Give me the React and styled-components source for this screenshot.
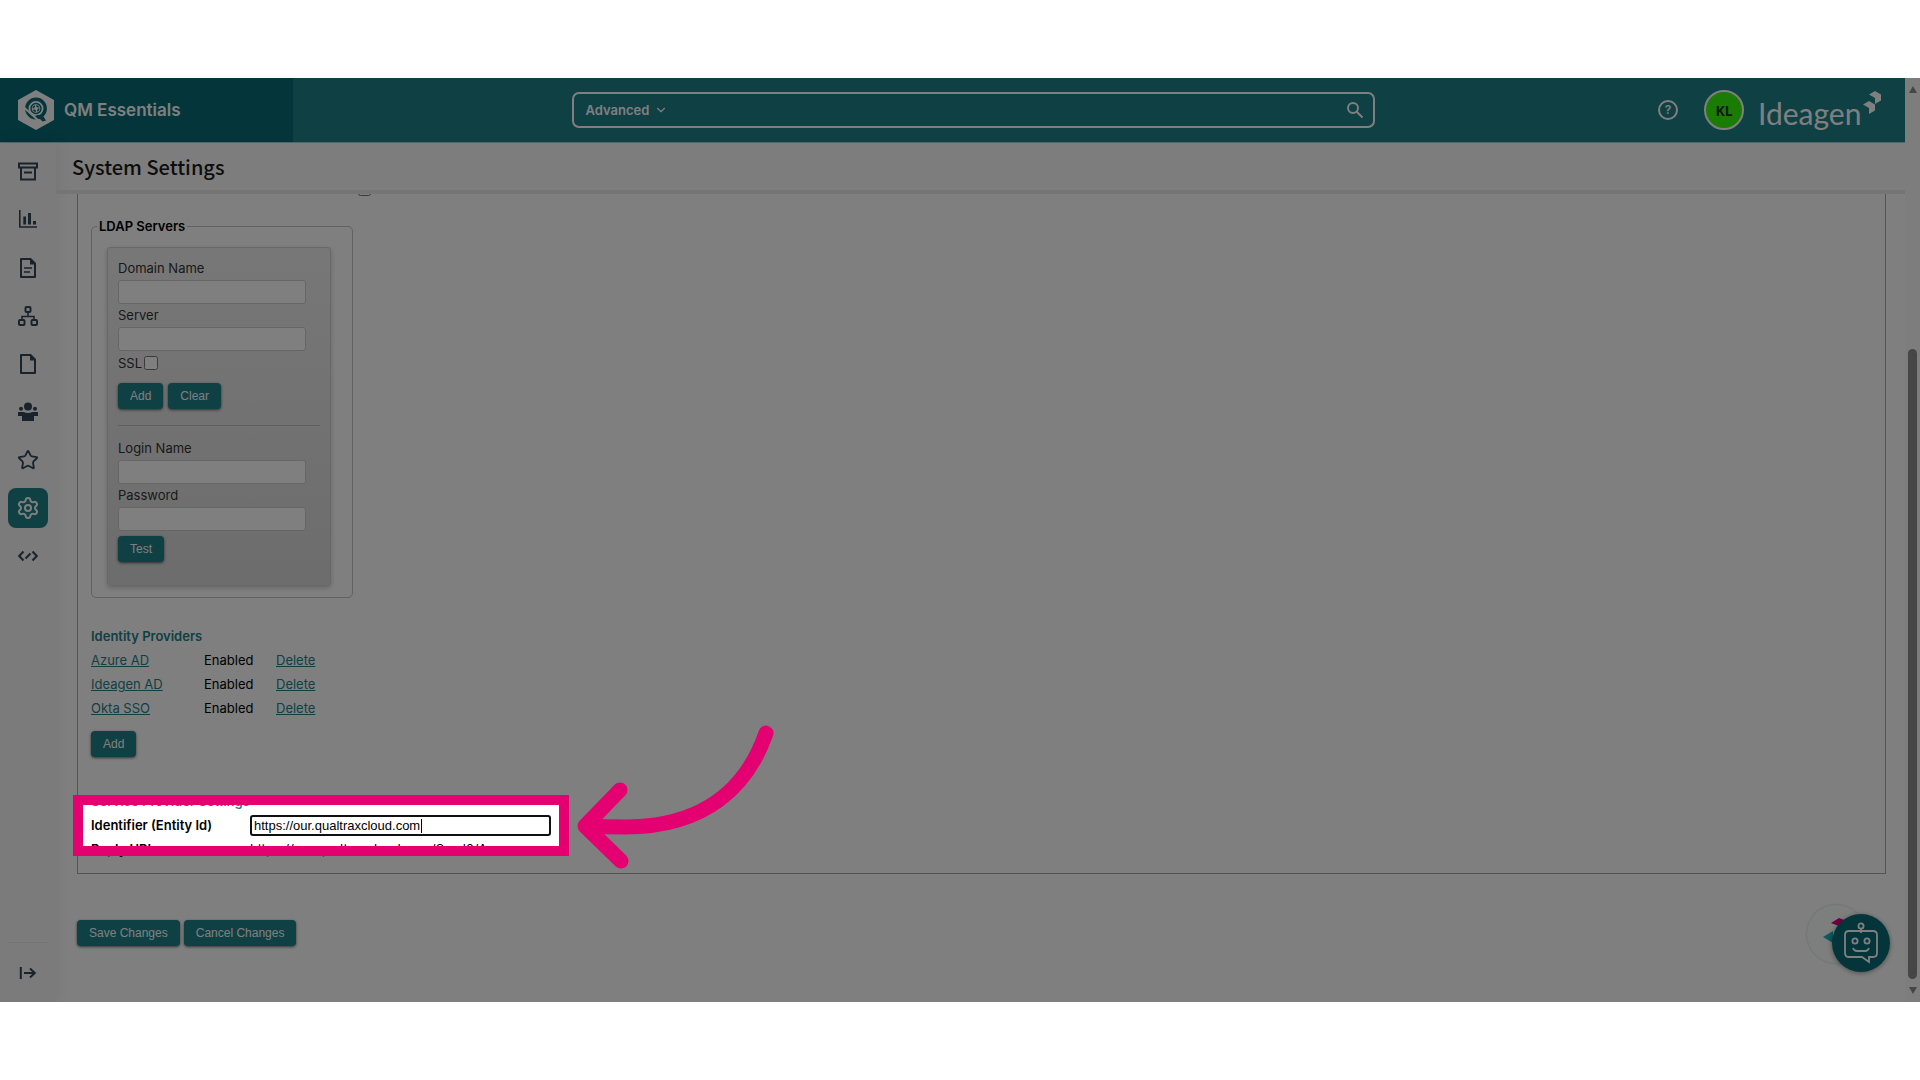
import React, { useState } from 'react';
import styled, { createGlobalStyle } from 'styled-components';
import { ChevronDown, Settings, Star } from 'lucide-react';

const providers = ['Azure AD', 'Ideagen AD', 'Okta SSO'];

const navItems = [
  {
    label: 'Archive',
    icon: (
      <svg viewBox='0 0 20 20'>
        <path d='M1 1.5h18v4H1zM3 6v11.5h14V6' />
        <path d='M6 10.5h8' />
      </svg>
    ),
  },
  {
    label: 'Reports',
    icon: (
      <svg viewBox='0 0 20 20'>
        <path d='M1.8 0v17h17.2' strokeWidth='1.6' />
        <path
          className='solid'
          d='M5.3 6.5H8v8H5.3zM10 3h3v11.5h-3zM15 11h3v3.5h-3z'
        />
      </svg>
    ),
  },
  {
    label: 'Documents',
    icon: (
      <svg viewBox='0 0 20 20'>
        <path d='M3 1h9.5L17 5.5V19H3z' strokeLinejoin='round' />
        <path className='solid' d='M12 1l5.5 5.5H12z' />
        <path d='M6 10h8M6 14h6' strokeWidth='1.6' />
      </svg>
    ),
  },
  {
    label: 'Workflow',
    icon: (
      <svg viewBox='0 0 20 20'>
        <rect x='7.5' y='1' width='5' height='5' rx='1' />
        <rect x='1' y='14' width='5.5' height='5' rx='1' />
        <rect x='13.5' y='14' width='5.5' height='5' rx='1' />
        <path d='M10 6v4M4 14v-3.5h12V14' strokeWidth='1.6' />
      </svg>
    ),
  },
  {
    label: 'Files',
    icon: (
      <svg viewBox='0 0 20 20'>
        <path d='M3 1h9.5L17 5.5V19H3z' strokeLinejoin='round' />
        <path className='solid' d='M12 1l5.5 5.5H12z' />
      </svg>
    ),
  },
  {
    label: 'People',
    icon: (
      <svg viewBox='0 0 20 20'>
        <circle className='solid' cx='10' cy='4.6' r='4' />
        <circle className='solid' cx='3' cy='6.8' r='2' />
        <circle className='solid' cx='17' cy='6.8' r='2' />
        <path
          className='solid'
          d='M0 10h5.5q4.5 2 9 0H20v4h-4v5H4v-5H0z'
        />
      </svg>
    ),
  },
  { label: 'Favourites', icon: <Star size={22} /> },
  { label: 'Settings', icon: <Settings size={24} />, active: true },
  {
    label: 'Developer',
    icon: (
      <svg viewBox='0 0 20 20'>
        <path d='M5.5 5.5L1.2 10l4.3 4.5M14.5 5.5l4.3 4.5-4.3 4.5M12.5 7.5l-5 5' />
      </svg>
    ),
  },
];

const Field = ({ id, label, type = 'text' }) => {
  return (
    <>
      <FieldLabel htmlFor={id}>{label}</FieldLabel>
      <TextInput id={id} type={type} />
    </>
  );
};

const App = () => {
  const [entityId, setEntityId] = useState('https://our.qualtraxcloud.com');

  return (
    <>
      <GlobalStyle />
      <Shell>
        <Page>
          <Header>
            <Brand>
              <svg width='36' height='40' viewBox='0 0 36 40'>
                <path fill='#fff' d='M18 0l18 10v20L18 40 0 30V10z' />
                <circle
                  cx='18'
                  cy='18.5'
                  r='9.2'
                  fill='none'
                  stroke='#066a76'
                  strokeWidth='3.4'
                />
                <path d='M18 25l6.5 6.5 3.5-1-3.5-5.5z' fill='#066a76' />
                <path d='M6 17.5L22 32' stroke='#fff' strokeWidth='2' />
                <circle
                  cx='18'
                  cy='18.5'
                  r='5'
                  fill='none'
                  stroke='#066a76'
                  strokeWidth='1.4'
                />
                <circle
                  cx='18'
                  cy='18.5'
                  r='2.8'
                  fill='none'
                  stroke='#066a76'
                  strokeWidth='1.6'
                  strokeDasharray='2.9 1.5'
                />
              </svg>
              <span>QM Essentials</span>
            </Brand>
            <SearchArea>
              <SearchBox>
                <button type='button' className='advanced'>
                  Advanced <ChevronDown size={14} />
                </button>
                <input type='search' aria-label='Search' />
                <button type='button' className='go' aria-label='Search'>
                  <svg width='18' height='18' viewBox='0 0 18 18'>
                    <circle cx='7' cy='7' r='5' />
                    <path d='M10.5 10.5l6 6' />
                  </svg>
                </button>
              </SearchBox>
            </SearchArea>
            <Actions>
              <button type='button' className='help' aria-label='Help'>
                ?
              </button>
              <button type='button' className='avatar'>
                KL
              </button>
              <Logo href='#home'>
                Ideagen
                <svg width='18' height='24' viewBox='0 0 18 24'>
                  <path d='M6 3.5L12 0l6 3.5v6L12 13V7z' />
                  <path d='M0 13.5L6 10l6 3.5v6L6 23v-6z' />
                </svg>
              </Logo>
            </Actions>
          </Header>

          <Body>
            <Sidebar>
              {navItems.map(({ label, icon, active }) => {
                return (
                  <NavButton
                    key={label}
                    type='button'
                    aria-label={label}
                    $active={active}
                  >
                    {icon}
                  </NavButton>
                );
              })}
              <SidebarFoot>
                <NavButton type='button' aria-label='Expand menu'>
                  <svg viewBox='0 0 20 20'>
                    <path d='M2.8 4v12M6 10h10.5M12 5.5l4.8 4.5-4.8 4.5' />
                  </svg>
                </NavButton>
              </SidebarFoot>
            </Sidebar>

            <Content>
              <TitleBar>
                <h1>System Settings</h1>
              </TitleBar>
              <Panel>
                <ScrolledRow>
                  <input type='checkbox' aria-label='Use LDAP' />
                </ScrolledRow>
                <Fieldset>
                  <legend>LDAP Servers</legend>
                  <ServerForm>
                    <Field id='domain' label='Domain Name' />
                    <Field id='server' label='Server' />
                    <CheckRow>
                      <label htmlFor='ssl'>SSL</label>
                      <input id='ssl' type='checkbox' />
                    </CheckRow>
                    <ButtonRow>
                      <Button type='button'>Add</Button>
                      <Button type='button'>Clear</Button>
                    </ButtonRow>
                    <hr />
                    <Field id='login' label='Login Name' />
                    <Field id='password' label='Password' type='password' />
                    <ButtonRow $tight>
                      <Button type='button'>Test</Button>
                    </ButtonRow>
                  </ServerForm>
                </Fieldset>

                <SectionTitle>Identity Providers</SectionTitle>
                <ProviderTable>
                  <tbody>
                    {providers.map((name) => {
                      return (
                        <tr key={name}>
                          <td>
                            <a href='#edit'>{name}</a>
                          </td>
                          <td>Enabled</td>
                          <td>
                            <a href='#delete'>Delete</a>
                          </td>
                        </tr>
                      );
                    })}
                  </tbody>
                </ProviderTable>
                <Button type='button'>Add</Button>

                <ServiceSettings>
                  <SectionTitle>Service Provider Settings</SectionTitle>
                  <SettingRow>
                    <label htmlFor='entity'>Identifier (Entity Id)</label>
                    <EntityField>
                      <input
                        id='entity'
                        type='text'
                        value={entityId}
                        onChange={(e) => setEntityId(e.target.value)}
                      />
                    </EntityField>
                    <Spotlight />
                    <Arrow viewBox='0 0 206 152'>
                      <path d='M196 13C178 65 137 107 55 107Q36 107 18 106' />
                      <path d='M50 70L15 106l36 35' />
                    </Arrow>
                  </SettingRow>
                  <SettingRow>
                    <strong>Reply URL</strong>
                    <span>https://our.qualtraxcloud.com/Saml2/Acs</span>
                  </SettingRow>
                </ServiceSettings>
              </Panel>
              <FormActions>
                <Button type='button'>Save Changes</Button>
                <Button type='button'>Cancel Changes</Button>
              </FormActions>
            </Content>
          </Body>

          <ChatWidget>
            <div className='bubble'>
              <svg width='58' height='58' viewBox='0 0 58 58'>
                <path fill='#e6007e' d='M24 18l8-5 8 3v8z' />
                <path fill='#e6007e' d='M24 18l7 1 4 5 5-6z' />
                <path fill='#20b2b8' d='M16 32l10-6v12z' />
              </svg>
            </div>
            <button type='button' aria-label='Open chat'>
              <svg width='36' height='42' viewBox='0 0 36 42'>
                <circle cx='18' cy='4' r='2.6' />
                <path d='M18 7v4' />
                <path d='M6 9h24q4 0 4 4v18q0 4-4 4h-4v5l-7-5H6q-4 0-4-4V13q0-4 4-4z' />
                <circle cx='12' cy='19' r='2.6' />
                <circle cx='24' cy='19' r='2.6' />
                <path d='M10 26q1 3 4 3h8q3 0 4-3' />
              </svg>
            </button>
          </ChatWidget>
        </Page>
        <Scrollbar>
          <i className='up' />
          <div className='thumb' />
          <i className='down' />
        </Scrollbar>
      </Shell>
    </>
  );
};

const GlobalStyle = createGlobalStyle`
  * {
    box-sizing: border-box;
  }
  body {
    margin: 0;
    background: #fff;
    color: #000;
    font-family: Inter, 'Liberation Sans', sans-serif;
    font-size: 13px;
    line-height: 24px;
  }
  button {
    margin: 0;
    border: none;
    cursor: pointer;
  }
  a {
    color: #1e8088;
  }
`;

/* clips the dimming cast by Spotlight */
const Shell = styled.div`
  position: relative;
  display: flex;
  margin: 78px 0;
  min-height: calc(100vh - 156px);
  overflow: hidden;
`;

const Page = styled.div`
  position: relative;
  flex: 1;
  min-width: 0;
  display: flex;
  flex-direction: column;
`;

const Header = styled.header`
  display: flex;
  height: 65px;
  background: #1e8088;
  border-bottom: 1px solid #aac8ca;
`;

const Brand = styled.div`
  display: flex;
  align-items: center;
  gap: 10px;
  width: 293px;
  padding-left: 18px;
  background: #066a76;
  color: #fff;
  font-size: 17px;
  font-weight: 600;
`;

const SearchArea = styled.div`
  flex: 1;
  display: flex;
  align-items: center;
  justify-content: center;
`;

const SearchBox = styled.div`
  display: flex;
  align-items: center;
  width: 100%;
  max-width: 803px;
  height: 36px;
  padding: 0 9px 0 12px;
  border: 2px solid #fff;
  border-radius: 7px;
  button {
    display: flex;
    align-items: center;
    padding: 0;
    background: transparent;
    color: #fff;
  }
  .advanced {
    gap: 5px;
    font-family: inherit;
    font-size: 13px;
    font-weight: 600;
  }
  input {
    flex: 1;
    border: none;
    outline: none;
    background: transparent;
    color: #fff;
  }
  .go svg {
    fill: none;
    stroke: #fff;
    stroke-width: 2;
  }
`;

const Actions = styled.div`
  display: flex;
  align-items: center;
  width: 252px;
  padding-left: 5px;
  .help {
    width: 20px;
    height: 20px;
    padding: 0;
    border: 2px solid #fff;
    border-radius: 50%;
    background: transparent;
    color: #fff;
    font-family: inherit;
    font-size: 12px;
    font-weight: 600;
    line-height: 16px;
  }
  .avatar {
    width: 40px;
    height: 40px;
    margin-left: 26px;
    padding: 0;
    border: 2px solid #fff;
    border-radius: 50%;
    background: #34f808;
    color: #22333f;
    font-family: 'Noto Sans', sans-serif;
    font-size: 14px;
    font-weight: 700;
  }
`;

const Logo = styled.a`
  display: flex;
  align-items: center;
  margin-left: 14px;
  padding-top: 5px;
  color: #fff;
  font-family: Lato, sans-serif;
  font-size: 30px;
  text-decoration: none;
  svg {
    margin: 0 0 20px 2px;
    fill: #fff;
  }
`;

const Body = styled.div`
  flex: 1;
  display: flex;
`;

const Sidebar = styled.nav`
  display: flex;
  flex-direction: column;
  gap: 8px;
  width: 56px;
  padding: 9px 8px;
  background: #f6f6f6;
  box-shadow: 0 0 18px rgba(0, 0, 0, 0.08);
`;

const NavButton = styled.button`
  display: flex;
  align-items: center;
  justify-content: center;
  width: 40px;
  height: 40px;
  padding: 0;
  border-radius: 8px;
  background: ${(props) => (props.$active ? '#1e8088' : 'transparent')};
  color: ${(props) => (props.$active ? '#fff' : '#334659')};
  svg:not(.lucide) {
    width: 20px;
    height: 20px;
    fill: none;
    stroke: currentColor;
    stroke-width: 2;
  }
  svg .solid {
    fill: currentColor;
    stroke: none;
  }
`;

const SidebarFoot = styled.div`
  margin-top: auto;
  padding-top: 10px;
  border-top: 1px solid #e6e6e6;
`;

const Content = styled.main`
  flex: 1;
  min-width: 0;
`;

const TitleBar = styled.div`
  height: 51px;
  padding: 0 16px;
  background: rgba(0, 0, 0, 0.02);
  border-bottom: 4px solid #eaeaea;
  h1 {
    margin: 0;
    font-family: 'Noto Sans CJK SC', 'Noto Sans', sans-serif;
    font-size: 20px;
    font-weight: 500;
    line-height: 47px;
    color: #1a1a1a;
  }
`;

const Panel = styled.section`
  margin: 0 19px 0 21px;
  padding: 0 13px 12px;
  border: 1px solid #a8a8a8;
  border-top: none;
`;

/* last line of the settings that are scrolled out of view */
const ScrolledRow = styled.div`
  display: flex;
  align-items: flex-end;
  height: 2px;
  padding-left: 267px;
  overflow: hidden;
  input {
    flex: none;
    margin: 0;
  }
`;

const Fieldset = styled.fieldset`
  width: 262px;
  margin: 20px 0 26px;
  padding: 11px 21px 11px 15px;
  border: 1px solid #c4c4c4;
  border-radius: 5px;
  legend {
    margin-left: -10px;
    padding: 0 2px;
    font-weight: 600;
    line-height: 20px;
  }
`;

const ServerForm = styled.div`
  display: flex;
  flex-direction: column;
  padding: 9px 10px 23px;
  border: 1px solid #d0d0d0;
  border-radius: 3px;
  background: linear-gradient(#efefef, #dadada);
  box-shadow: 0 2px 5px rgba(0, 0, 0, 0.2);
  color: #333;
  hr {
    width: 100%;
    height: 1px;
    margin: 16px 0 11px;
    border: none;
    background: #c0c0c0;
  }
`;

const FieldLabel = styled.label`
  line-height: 23px;
`;

const TextInput = styled.input`
  width: 188px;
  height: 24px;
  border: 1px solid #ccc;
  border-radius: 3px;
  background: #fff;
`;

const CheckRow = styled.div`
  display: flex;
  align-items: center;
  gap: 2px;
  height: 24px;
  input {
    width: 14px;
    height: 14px;
    margin: 0;
  }
`;

const ButtonRow = styled.div`
  display: flex;
  gap: 5px;
  margin-top: ${(props) => (props.$tight ? '5px' : '8px')};
`;

const Button = styled.button`
  height: 26px;
  padding: 0 12px;
  border-radius: 4px;
  background: #1e8088;
  box-shadow: 0 1px 3px rgba(0, 0, 0, 0.6);
  color: #fff;
  font-family: 'Liberation Sans', sans-serif;
  font-size: 12px;
`;

const SectionTitle = styled.h2`
  margin: 0;
  color: #1e8088;
  font-size: 13px;
  font-weight: 600;
  line-height: 24px;
`;

const ProviderTable = styled.table`
  margin-bottom: 11px;
  border-collapse: collapse;
  td {
    padding: 0;
  }
  td:nth-child(1) {
    width: 113px;
  }
  td:nth-child(2) {
    width: 72px;
  }
`;

const ServiceSettings = styled.div`
  margin-top: 32px;
`;

const SettingRow = styled.div`
  position: relative;
  display: flex;
  align-items: center;
  height: 24px;
  label,
  strong {
    width: 159px;
    font-weight: 600;
  }
`;

const EntityField = styled.div`
  display: flex;
  position: relative;
  input {
    width: 301px;
    height: 21px;
    padding: 0 2px;
    border: 2px solid #101010;
    border-radius: 3px;
    background: #fff;
    font-family: 'Liberation Sans', sans-serif;
    font-size: 13px;
  }
  /* text caret */
  &::after {
    content: '';
    position: absolute;
    top: 4px;
    left: 171px;
    width: 1px;
    height: 14px;
    background: #000;
  }
`;

const Spotlight = styled.div`
  position: absolute;
  top: -18px;
  left: -18px;
  z-index: 10;
  width: 496px;
  height: 61px;
  border: 10px solid #e50071;
  box-shadow: 0 0 0 4000px rgba(0, 0, 0, 0.5);
  pointer-events: none;
`;

const Arrow = styled.svg`
  position: absolute;
  top: -93px;
  left: 479px;
  z-index: 11;
  width: 206px;
  height: 152px;
  fill: none;
  stroke: #e50071;
  stroke-width: 15;
  stroke-linecap: round;
  stroke-linejoin: round;
  pointer-events: none;
`;

const FormActions = styled.div`
  display: flex;
  gap: 4px;
  padding: 46px 21px 40px;
`;

const ChatWidget = styled.div`
  position: absolute;
  right: 15px;
  bottom: 30px;
  width: 83px;
  height: 67px;
  .bubble {
    width: 58px;
    height: 58px;
    border-radius: 50%;
    background: #fafdfd;
    box-shadow: 0 0 3px rgba(0, 0, 0, 0.2);
  }
  button {
    position: absolute;
    right: 0;
    bottom: 0;
    display: flex;
    align-items: center;
    justify-content: center;
    width: 58px;
    height: 58px;
    padding: 0;
    border-radius: 50%;
    background: #066a76;
    box-shadow: 0 1px 5px rgba(0, 0, 0, 0.4);
  }
  button svg {
    fill: none;
    stroke: #fff;
    stroke-width: 1.8;
  }
`;

const Scrollbar = styled.div`
  display: flex;
  flex-direction: column;
  align-items: center;
  width: 15px;
  padding: 8px 0;
  background: #fafafa;
  i {
    border: 4px solid transparent;
  }
  .up {
    border-top: none;
    border-bottom: 7px solid #8c8c8c;
  }
  .down {
    border-bottom: none;
    border-top: 7px solid #8c8c8c;
  }
  .thumb {
    width: 9px;
    height: 630px;
    margin: auto 0 8px;
    border-radius: 5px;
    background: #8c8c8c;
  }
`;

export default App;
